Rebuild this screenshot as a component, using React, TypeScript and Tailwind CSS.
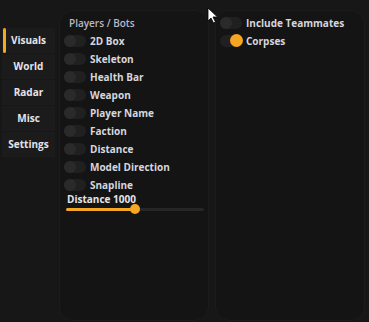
import React from 'react';

const tabs = ['Visuals', 'World', 'Radar', 'Misc', 'Settings'];
const players = ['2D Box', 'Skeleton', 'Health Bar', 'Weapon', 'Player Name', 'Faction', 'Distance', 'Model Direction', 'Snapline'];

function Toggle({ on = false }: { on?: boolean }) {
  return (
    <div className="relative w-[22px] h-[12px] rounded-full bg-[#202020] shrink-0">
      {on ? (
        <div className="absolute right-[-1px] top-[-1px] w-[13px] h-[13px] rounded-full bg-[#f5a623]" />
      ) : (
        <div className="absolute left-0 top-0 w-[12px] h-[12px] rounded-full bg-[#2a2a2a]" />
      )}
    </div>
  );
}

function Row({ label, on }: { label: string; on?: boolean }) {
  return (
    <div className="flex items-center gap-[4px] h-[18px]">
      <Toggle on={on} />
      <span className="text-[10px] font-bold text-[#d6d6de] leading-none">{label}</span>
    </div>
  );
}

export default function App() {
  return (
    <div
      className="relative w-[369px] h-[322px] bg-[#171717] flex overflow-hidden"
      style={{ fontFamily: '"Open Sans", "Noto Sans", sans-serif' }}
    >
      {/* tabs */}
      <div className="w-[53px] ml-[2px] pt-[28px] flex flex-col gap-px">
        {tabs.map((t, i) => (
          <div key={t} className="relative h-[25px] bg-[#1b1b1b] flex items-center justify-center">
            {i === 0 && <div className="absolute left-[1px] top-0 w-[3px] h-full bg-[#f5a623] rounded-sm" />}
            <span className="text-[10px] font-bold text-[#e4e4ea]">{t}</span>
          </div>
        ))}
      </div>

      {/* players panel */}
      <div className="ml-[4px] mt-[10px] w-[150px] h-[311px] rounded-[14px] bg-[#141414] border border-[#1b1b1b] px-[4px] pt-[3px]">
        <div className="text-[10px] font-semibold text-[#b9b9c6] pl-[5px] h-[18px] flex items-center">Players / Bots</div>
        <div className="flex flex-col">
          {players.map(p => <Row key={p} label={p} />)}
        </div>
        <div className="text-[10px] font-bold text-[#e4e4ea] pl-[3px] leading-none">Distance 1000</div>
        <div className="relative mt-[4px] ml-[2px] w-[138px] h-[3px] bg-[#262626] rounded-full">
          <div className="absolute left-0 top-0 h-full w-[69px] bg-[#f5a623] rounded-full" />
          <div className="absolute left-[64px] top-[-4px] w-[10px] h-[10px] rounded-full bg-[#f5a623]" />
        </div>
      </div>

      {/* filters panel */}
      <div className="ml-[6px] mt-[10px] w-[150px] h-[311px] rounded-[14px] bg-[#141414] border border-[#1b1b1b] px-[4px] pt-[3px]">
        <Row label="Include Teammates" />
        <Row label="Corpses" on />
      </div>

      {/* mouse cursor */}
      <svg className="absolute left-[207px] top-[7px]" width="12" height="17" viewBox="0 0 12 17">
        <path d="M1 1 L1 14 L4 11 L6.5 16 L8.5 15 L6 10 L10.5 10 Z" fill="#ffffff" stroke="#000000" strokeWidth="0.8" />
      </svg>
    </div>
  );
}
